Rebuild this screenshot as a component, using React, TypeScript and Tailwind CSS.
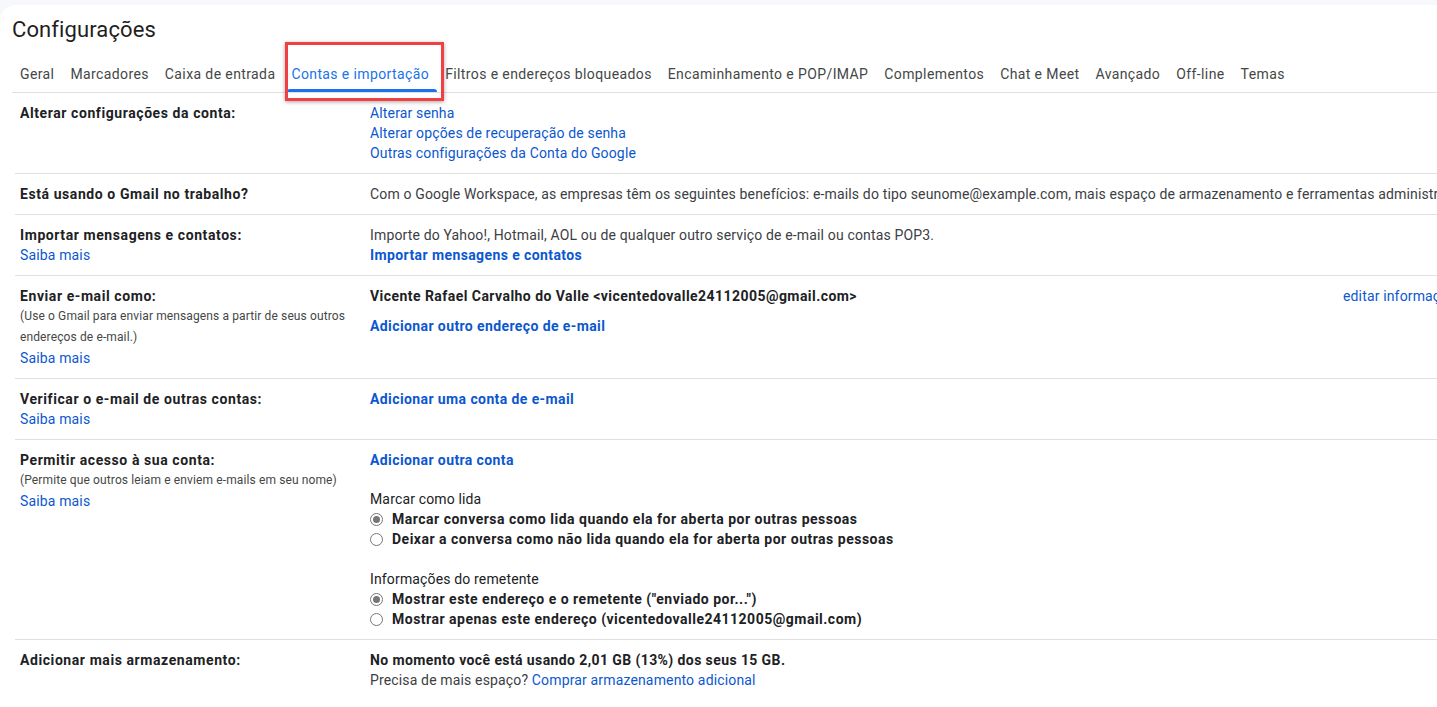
import React from 'react';

const tabs = [
  'Geral',
  'Marcadores',
  'Caixa de entrada',
  'Contas e importação',
  'Filtros e endereços bloqueados',
  'Encaminhamento e POP/IMAP',
  'Complementos',
  'Chat e Meet',
  'Avançado',
  'Off-line',
  'Temas',
];

function Link({ children, bold }: { children: React.ReactNode; bold?: boolean }) {
  return (
    <a
      className={`text-[#0b57d0] cursor-pointer hover:underline ${
        bold ? 'font-bold tracking-[0.4px]' : 'tracking-[0.15px]'
      }`}
    >
      {children}
    </a>
  );
}

function Radio({ checked, children }: { checked?: boolean; children: React.ReactNode }) {
  return (
    <label className="flex items-center h-5 font-bold tracking-[0.5px] text-[#202124]">
      <span className="w-[13px] h-[13px] rounded-full border border-[#767676] flex items-center justify-center mr-[9px] bg-white">
        {checked && <span className="w-[7px] h-[7px] rounded-full bg-[#767676]" />}
      </span>
      {children}
    </label>
  );
}

function Row({ label, children, last }: { label: React.ReactNode; children: React.ReactNode; last?: boolean }) {
  return (
    <div className={`flex pt-[10px] pb-[10px] ${last ? '' : 'border-b border-[#e0e0e0]'}`}>
      <div className="w-[355px] shrink-0 pl-[5px]">{label}</div>
      <div className="flex-1 min-w-0 whitespace-nowrap tracking-[0.15px]">{children}</div>
    </div>
  );
}

function Label({ title, note, saiba }: { title: string; note?: React.ReactNode; saiba?: boolean }) {
  return (
    <div className="flex flex-col">
      <span className="font-bold text-[#202124] leading-5 tracking-[0.58px]">{title}</span>
      {note && <span className="text-[12px] leading-[21px] text-[#444746] tracking-[0.12px]">{note}</span>}
      {saiba && (
        <span className="leading-5">
          <Link>Saiba mais</Link>
        </span>
      )}
    </div>
  );
}

export default function App() {
  return (
    <div
      className="w-screen h-screen overflow-hidden bg-[#f6f8fc] pt-[5px] text-[14px] leading-5 text-[#202124]"
      style={{ fontFamily: 'Roboto, "Noto Sans", Arial, sans-serif' }}
    >
      <div className="bg-white rounded-tl-2xl h-full pt-[11px]">
        <h1 className="text-[22px] leading-7 text-[#1f1f1f] pl-[12px] font-normal tracking-[0.1px]">Configurações</h1>

        {/* abas */}
        <div className="mt-[12px] ml-[12px] flex border-b border-[#e0e0e0] whitespace-nowrap tracking-[0.39px]">
          {tabs.map((t) => {
            const active = t === 'Contas e importação';
            return (
              <div
                key={t}
                className={`relative px-2 h-9 flex items-center ${active ? 'text-[#1a73e8]' : 'text-[#444746]'}`}
              >
                {t}
                {active && (
                  <>
                    <span className="absolute left-[4px] right-0 bottom-0 h-[3px] bg-[#1a73e8] rounded-t-sm" />
                    <span className="absolute -top-[14px] -bottom-[9px] left-[2px] -right-[7px] border-[3px] border-[#f23f43] shadow-[0_1px_4px_rgba(0,0,0,0.35)] pointer-events-none" />
                  </>
                )}
              </div>
            );
          })}
        </div>

        <div className="pl-[15px]">
          <Row label={<Label title="Alterar configurações da conta:" />}>
            <div className="flex flex-col items-start">
              <Link>Alterar senha</Link>
              <Link>Alterar opções de recuperação de senha</Link>
              <Link>Outras configurações da Conta do Google</Link>
            </div>
          </Row>

          <Row label={<Label title="Está usando o Gmail no trabalho?" />}>
            <span className="text-[#3c4043]">
              Com o Google Workspace, as empresas têm os seguintes benefícios: e-mails do tipo seunome@example.com, mais espaço de armazenamento e ferramentas administrativas.
            </span>
          </Row>

          <Row label={<Label title="Importar mensagens e contatos:" saiba />}>
            <div className="flex flex-col items-start">
              <span className="text-[#3c4043]">Importe do Yahoo!, Hotmail, AOL ou de qualquer outro serviço de e-mail ou contas POP3.</span>
              <Link bold>Importar mensagens e contatos</Link>
            </div>
          </Row>

          <Row
            label={
              <Label
                title="Enviar e-mail como:"
                note={
                  <>
                    (Use o Gmail para enviar mensagens a partir de seus outros
                    <br />
                    endereços de e-mail.)
                  </>
                }
                saiba
              />
            }
          >
            <div className="flex">
              <div className="w-[973px] shrink-0 flex flex-col items-start">
                <span className="font-bold tracking-[0.45px]">
                  Vicente Rafael Carvalho do Valle &lt;vicentedovalle24112005@gmail.com&gt;
                </span>
                <span className="mt-[10px]">
                  <Link bold>Adicionar outro endereço de e-mail</Link>
                </span>
              </div>
              <Link>editar informações</Link>
            </div>
          </Row>

          <Row label={<Label title="Verificar o e-mail de outras contas:" saiba />}>
            <Link bold>Adicionar uma conta de e-mail</Link>
          </Row>

          <Row
            label={
              <Label
                title="Permitir acesso à sua conta:"
                note="(Permite que outros leiam e enviem e-mails em seu nome)"
                saiba
              />
            }
          >
            <div className="flex flex-col items-start">
              <Link bold>Adicionar outra conta</Link>
              <span className="mt-[19px] text-[#202124]">Marcar como lida</span>
              <Radio checked>Marcar conversa como lida quando ela for aberta por outras pessoas</Radio>
              <Radio>Deixar a conversa como não lida quando ela for aberta por outras pessoas</Radio>
              <span className="mt-5 text-[#202124]">Informações do remetente</span>
              <Radio checked>Mostrar este endereço e o remetente ("enviado por...")</Radio>
              <Radio>Mostrar apenas este endereço (vicentedovalle24112005@gmail.com)</Radio>
            </div>
          </Row>

          <Row label={<Label title="Adicionar mais armazenamento:" />} last>
            <div className="flex flex-col items-start">
              <span className="font-bold tracking-[0.4px]">No momento você está usando 2,01 GB (13%) dos seus 15 GB.</span>
              <span className="text-[#3c4043]">
                Precisa de mais espaço? <Link>Comprar armazenamento adicional</Link>
              </span>
            </div>
          </Row>
        </div>
      </div>
    </div>
  );
}
